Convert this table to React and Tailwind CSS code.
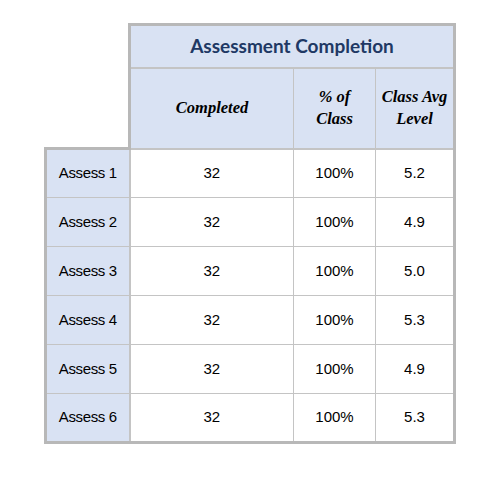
const ROWS = [
  ["Assess 1", "32", "100%", "5.2"],
  ["Assess 2", "32", "100%", "4.9"],
  ["Assess 3", "32", "100%", "5.0"],
  ["Assess 4", "32", "100%", "5.3"],
  ["Assess 5", "32", "100%", "4.9"],
  ["Assess 6", "32", "100%", "5.3"],
];

const SANS = { fontFamily: '"Liberation Sans", Arial, sans-serif' };

export default function App() {
  return (
    <div className="w-[479px] h-[500px] bg-white pt-[23px] pl-[44px]">
      <table className="table-fixed border-collapse" style={SANS}>
        <colgroup>
          <col className="w-[84px]" />
          <col className="w-[164px]" />
          <col className="w-[82px]" />
          <col className="w-[79px]" />
        </colgroup>
        <thead>
          <tr className="h-[43px]">
            <th rowSpan={2} className="border-0 bg-white"></th>
            <th
              colSpan={3}
              className="bg-[#d9e2f3] border-[3px] border-[#b8b8b8] border-b-2 border-b-[#c4c4c4] text-[#203864] text-[19px] font-bold text-center align-middle"
              style={{ fontFamily: 'Lato, "Open Sans", sans-serif' }}
            >
              Assessment Completion
            </th>
          </tr>
          <tr className="h-[81px]">
            {["Completed", "% of\nClass", "Class Avg\nLevel"].map((h, i) => (
              <th
                key={h}
                className={`bg-[#d9e2f3] border border-[#c4c4c4] border-b-2 text-[16.5px] leading-[22px] font-bold italic text-black text-center align-middle whitespace-pre-line ${
                  i === 0 ? "border-l-[3px] border-l-[#b8b8b8]" : ""
                } ${i === 2 ? "border-r-[3px] border-r-[#b8b8b8]" : ""}`}
                style={{ fontFamily: '"Liberation Serif", "DejaVu Serif", serif' }}
              >
                {h}
              </th>
            ))}
          </tr>
        </thead>
        <tbody>
          {ROWS.map((r, ri) => (
            <tr key={r[0]} className="h-[49px]">
              {r.map((c, ci) => (
                <td
                  key={ci}
                  className={`border border-[#c4c4c4] text-center align-middle text-[15px] text-black ${
                    ci === 0 ? "bg-[#d9e2f3] border-l-[3px] border-l-[#b8b8b8] border-r-2 tracking-tight" : "bg-white"
                  } ${ci === 3 ? "border-r-[3px] border-r-[#b8b8b8]" : ""} ${
                    ri === 0 && ci === 0 ? "border-t-[3px] border-t-[#b8b8b8]" : ""
                  } ${ri === ROWS.length - 1 ? "border-b-[3px] border-b-[#b8b8b8]" : ""}`}
                >
                  {c}
                </td>
              ))}
            </tr>
          ))}
        </tbody>
      </table>
    </div>
  );
}
